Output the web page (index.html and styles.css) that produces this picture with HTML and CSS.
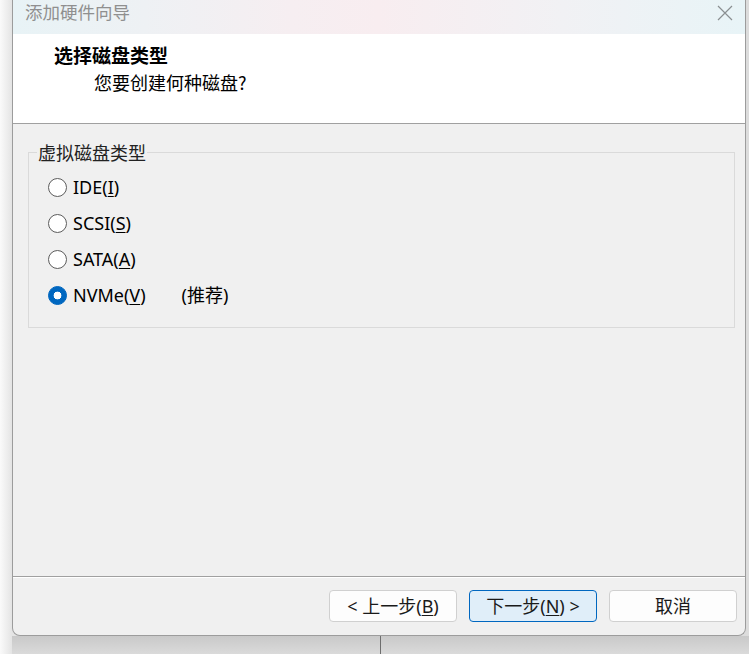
FILE: index.html
```html
<!DOCTYPE html>
<html lang="zh-CN">
<head>
<meta charset="utf-8">
<title>添加硬件向导</title>
<link rel="stylesheet" href="styles.css">
</head>
<body>
<div class="desk">
  <div class="window">
    <div class="titlebar">
      <span class="title">添加硬件向导</span>
      <svg class="close" width="16" height="16" viewBox="0 0 16 16"><path d="M1 1 L15 15 M15 1 L1 15" stroke="#8a8f91" stroke-width="1.2" fill="none"/></svg>
    </div>
    <div class="header">
      <div class="h1">选择磁盘类型</div>
      <div class="h2">您要创建何种磁盘?</div>
    </div>
    <div class="content">
      <fieldset class="group">
        <legend>虚拟磁盘类型</legend>
        <div class="row"><span class="radio"></span><span class="lbl">IDE(<u>I</u>)</span></div>
        <div class="row"><span class="radio"></span><span class="lbl">SCSI(<u>S</u>)</span></div>
        <div class="row"><span class="radio"></span><span class="lbl">SATA(<u>A</u>)</span></div>
        <div class="row"><span class="radio on"></span><span class="lbl">NVMe(<u>V</u>)</span><span class="rec">(推荐)</span></div>
      </fieldset>
    </div>
    <div class="footer">
      <button class="btn">&lt; 上一步(<u>B</u>)</button>
      <button class="btn primary">下一步(<u>N</u>) &gt;</button>
      <button class="btn">取消</button>
    </div>
  </div>
  <div class="under"><div class="vline"></div></div>
</div>
</body>
</html>
```
FILE: styles.css
```css
* { box-sizing: border-box; }
html, body { margin: 0; padding: 0; }
body {
  width: 749px;
  height: 654px;
  overflow: hidden;
  font-family: "Noto Sans", "Noto Sans CJK SC", sans-serif;
  color: #000;
}
.desk {
  width: 749px;
  height: 654px;
  padding-left: 12px;
  display: flex;
  flex-direction: column;
  background: linear-gradient(to right, #fafafa 0, #e4e4e4 12px, #dcdcdc 60px, #dcdcdc 100%);
}
.window {
  width: 734px;
  height: 636px;
  flex: none;
  display: flex;
  flex-direction: column;
  background: #f0f0f0;
  border-left: 1px solid #9c9c9c;
  border-right: 1px solid #9c9c9c;
  border-bottom: 1px solid #9c9c9c;
  border-radius: 0 0 8px 8px;
  overflow: hidden;
}
.titlebar {
  height: 34px;
  flex: none;
  display: flex;
  align-items: center;
  justify-content: space-between;
  padding: 0 12px 10px 12px;
  background: linear-gradient(to right, #e8f3f6 0%, #eef1f4 18%, #f6eef1 38%, #f8edf0 50%, #f1f1f4 75%, #e8f4f7 100%);
}
.title {
  font-family: "Noto Sans CJK SC", sans-serif;
  font-size: 17.5px;
  line-height: 22px;
  color: #8f8f8f;
}
.close { margin-top: 1px; margin-right: 0; }
.header {
  height: 90px;
  flex: none;
  background: #fff;
  border-bottom: 1px solid #a0a0a0;
  padding: 9px 0 0 41px;
}
.h1 {
  font-family: "Noto Sans CJK SC", sans-serif;
  font-weight: 700;
  font-size: 19px;
  line-height: 24px;
}
.h2 {
  font-family: "Noto Sans CJK SC", sans-serif;
  font-size: 18px;
  line-height: 24px;
  margin-top: 3px;
  padding-left: 40px;
}
.content {
  flex: 1;
  border-bottom: 1px solid #a0a0a0;
  padding: 17px 10px 0 15px;
}
.group {
  margin: 0;
  height: 187px;
  border: 1px solid #dadada;
  padding: 6px 0 0 19px;
}
.group legend {
  font-family: "Noto Sans CJK SC", sans-serif;
  font-size: 18px;
  line-height: 22px;
  color: #222;
  padding: 0 1px;
  margin-left: -11px;
}
.row {
  height: 36px;
  display: flex;
  align-items: center;
}
.radio {
  width: 19px;
  height: 19px;
  border: 1px solid #5c5c5c;
  border-radius: 50%;
  background: #fff;
  margin-right: 6px;
  flex: none;
}
.radio.on {
  border-color: #0067c0;
  background: #0067c0 radial-gradient(circle, #fff 0, #fff 3.6px, transparent 4.2px);
}
.lbl, .rec {
  font-size: 18px;
  line-height: 22px;
}
.rec {
  margin-left: 36px;
  font-family: "Noto Sans", "Noto Sans CJK SC", sans-serif;
}
u { text-underline-offset: 2px; }
.footer {
  height: 58px;
  flex: none;
  border-top: 1px solid #fff;
  display: flex;
  justify-content: flex-end;
  gap: 12px;
  padding: 12px 8px 0 0;
}
.btn {
  width: 128px;
  height: 32px;
  border: 1px solid #d0d0d0;
  border-radius: 4px;
  background: #fdfdfd;
  font-family: "Noto Sans", "Noto Sans CJK SC", sans-serif;
  font-size: 18px;
  color: #1a1a1a;
  padding: 0;
  line-height: 28px;
}
.btn.primary {
  border-color: #0067c0;
  background: #e0eef9;
}
.under {
  flex: 1;
  background: linear-gradient(to bottom, #c9c9c9, #dadada);
  padding-left: 368px;
}
.vline {
  width: 1px;
  height: 100%;
  background: #6e6e6e;
}
```
